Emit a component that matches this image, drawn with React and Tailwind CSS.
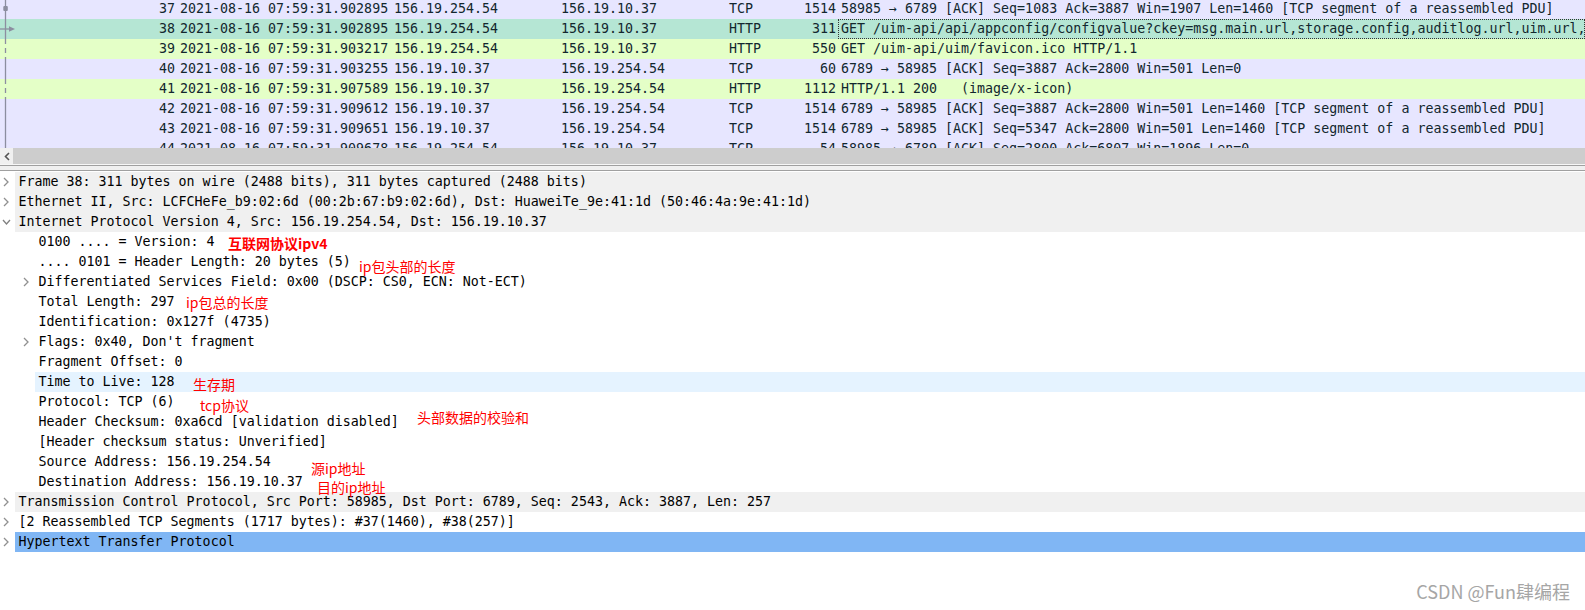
import React from "react";

const mono = "font-['DejaVu_Sans_Mono',monospace] text-[13.3px]";
const TCP = "bg-[#e7e6ff]";
const HTTP = "bg-[#e4ffc7]";

const packets = [
  { no: 37, time: "2021-08-16 07:59:31.902895", src: "156.19.254.54", dst: "156.19.10.37", proto: "TCP", len: 1514, info: "58985 → 6789 [ACK] Seq=1083 Ack=3887 Win=1907 Len=1460 [TCP segment of a reassembled PDU]", bg: TCP, mark: "dot" },
  { no: 38, time: "2021-08-16 07:59:31.902895", src: "156.19.254.54", dst: "156.19.10.37", proto: "HTTP", len: 311, info: "GET /uim-api/api/appconfig/configvalue?ckey=msg.main.url,storage.config,auditlog.url,uim.url,oss.url HTTP/1.1", bg: "bg-[#b5e6d4]", mark: "arrow", focus: true },
  { no: 39, time: "2021-08-16 07:59:31.903217", src: "156.19.254.54", dst: "156.19.10.37", proto: "HTTP", len: 550, info: "GET /uim-api/uim/favicon.ico HTTP/1.1", bg: HTTP, mark: "dash" },
  { no: 40, time: "2021-08-16 07:59:31.903255", src: "156.19.10.37", dst: "156.19.254.54", proto: "TCP", len: 60, info: "6789 → 58985 [ACK] Seq=3887 Ack=2800 Win=501 Len=0", bg: TCP, mark: "line" },
  { no: 41, time: "2021-08-16 07:59:31.907589", src: "156.19.10.37", dst: "156.19.254.54", proto: "HTTP", len: 1112, info: "HTTP/1.1 200   (image/x-icon)", bg: HTTP, mark: "dash" },
  { no: 42, time: "2021-08-16 07:59:31.909612", src: "156.19.10.37", dst: "156.19.254.54", proto: "TCP", len: 1514, info: "6789 → 58985 [ACK] Seq=3887 Ack=2800 Win=501 Len=1460 [TCP segment of a reassembled PDU]", bg: TCP, mark: "line" },
  { no: 43, time: "2021-08-16 07:59:31.909651", src: "156.19.10.37", dst: "156.19.254.54", proto: "TCP", len: 1514, info: "6789 → 58985 [ACK] Seq=5347 Ack=2800 Win=501 Len=1460 [TCP segment of a reassembled PDU]", bg: TCP, mark: "line" },
  { no: 44, time: "2021-08-16 07:59:31.909678", src: "156.19.254.54", dst: "156.19.10.37", proto: "TCP", len: 54, info: "58985 → 6789 [ACK] Seq=2800 Ack=6807 Win=1896 Len=0", bg: TCP, mark: "line" },
];

const tree = [
  { lvl: 0, arrow: "right", bg: "bg-[#f0f0f0]", text: "Frame 38: 311 bytes on wire (2488 bits), 311 bytes captured (2488 bits)" },
  { lvl: 0, arrow: "right", bg: "bg-[#f0f0f0]", text: "Ethernet II, Src: LCFCHeFe_b9:02:6d (00:2b:67:b9:02:6d), Dst: HuaweiTe_9e:41:1d (50:46:4a:9e:41:1d)" },
  { lvl: 0, arrow: "down", bg: "bg-[#f0f0f0]", text: "Internet Protocol Version 4, Src: 156.19.254.54, Dst: 156.19.10.37" },
  { lvl: 1, text: "0100 .... = Version: 4" },
  { lvl: 1, text: ".... 0101 = Header Length: 20 bytes (5)" },
  { lvl: 1, arrow: "right", text: "Differentiated Services Field: 0x00 (DSCP: CS0, ECN: Not-ECT)" },
  { lvl: 1, text: "Total Length: 297" },
  { lvl: 1, text: "Identification: 0x127f (4735)" },
  { lvl: 1, arrow: "right", text: "Flags: 0x40, Don't fragment" },
  { lvl: 1, text: "Fragment Offset: 0" },
  { lvl: 1, bg: "bg-[#e5f3ff]", text: "Time to Live: 128" },
  { lvl: 1, text: "Protocol: TCP (6)" },
  { lvl: 1, text: "Header Checksum: 0xa6cd [validation disabled]" },
  { lvl: 1, text: "[Header checksum status: Unverified]" },
  { lvl: 1, text: "Source Address: 156.19.254.54" },
  { lvl: 1, text: "Destination Address: 156.19.10.37" },
  { lvl: 0, arrow: "right", bg: "bg-[#f0f0f0]", text: "Transmission Control Protocol, Src Port: 58985, Dst Port: 6789, Seq: 2543, Ack: 3887, Len: 257" },
  { lvl: 0, arrow: "right", text: "[2 Reassembled TCP Segments (1717 bytes): #37(1460), #38(257)]" },
  { lvl: 0, arrow: "right", bg: "bg-[#80b6f4]", text: "Hypertext Transfer Protocol" },
];

// red notes drawn on top of the screenshot
const notes = [
  { text: "互联网协议ipv4", cls: "left-[228px] top-[233px] font-bold" },
  { text: "ip包头部的长度", cls: "left-[359px] top-[256px]" },
  { text: "ip包总的长度", cls: "left-[186px] top-[292px]" },
  { text: "生存期", cls: "left-[193px] top-[374px]" },
  { text: "tcp协议", cls: "left-[200px] top-[395px]" },
  { text: "头部数据的校验和", cls: "left-[417px] top-[407px]" },
  { text: "源ip地址", cls: "left-[311px] top-[458px]" },
  { text: "目的ip地址", cls: "left-[317px] top-[477px]" },
];

const Mark = ({ type }) => (
  <svg width="16" height="20" viewBox="0 0 16 20" className="shrink-0">
    <line x1="5.5" y1="0" x2="5.5" y2="20" stroke="#8c8ea0" strokeWidth="1.3" strokeDasharray={type === "dash" ? "5 4" : undefined} />
    {type === "dot" && <rect x="3.3" y="7" width="4.5" height="5" rx="1" fill="#8c8ea0" />}
    {type === "arrow" && (
      <>
        <line x1="0" y1="10" x2="10" y2="10" stroke="#8c8ea0" strokeWidth="1.3" />
        <polygon points="9,7.2 15,10 9,12.8" fill="#8c8ea0" />
      </>
    )}
  </svg>
);

const Chevron = ({ dir }) =>
  dir === "down" ? (
    <svg width="9" height="10" viewBox="0 0 9 10">
      <polyline points="1,3 4.5,7 8,3" fill="none" stroke="#808080" strokeWidth="1.3" />
    </svg>
  ) : (
    <svg width="9" height="10" viewBox="0 0 9 10">
      <polyline points="2,1 6,5 2,9" fill="none" stroke="#909090" strokeWidth="1.3" />
    </svg>
  );

const PacketRow = ({ p }) => (
  <div className={`flex h-[20px] items-center whitespace-pre text-[#12272e] ${p.bg}`}>
    <Mark type={p.mark} />
    <div className="w-[159px] shrink-0 text-right">{p.no}</div>
    <div className="w-[219px] shrink-0 pl-[5px]">{p.time}</div>
    <div className="w-[167px] shrink-0">{p.src}</div>
    <div className="w-[168px] shrink-0">{p.dst}</div>
    <div className="w-[74px] shrink-0">{p.proto}</div>
    <div className="w-[33px] shrink-0 text-right">{p.len}</div>
    <div
      className={`ml-[2px] flex h-[20px] flex-1 items-center overflow-hidden border border-dotted pl-[2px] ${
        p.focus ? "border-[#333]" : "border-transparent"
      }`}
    >
      {p.info}
    </div>
  </div>
);

const TreeRow = ({ r }) => (
  <div className="flex h-[20px]">
    <div className={`flex shrink-0 items-center ${r.lvl === 1 ? "w-[35px] pl-[22px]" : "w-[15px] pl-[2px]"}`}>
      {r.arrow && <Chevron dir={r.arrow} />}
    </div>
    <div className={`flex flex-1 items-center whitespace-pre pl-[3.5px] ${r.bg || ""}`}>{r.text}</div>
  </div>
);

export default function App() {
  return (
    <div className={`relative h-[610px] w-[1585px] overflow-hidden bg-white text-black ${mono}`}>
      <div className="h-[148px] overflow-hidden">
        <div className="-mt-px">
          {packets.map((p) => (
            <PacketRow key={p.no} p={p} />
          ))}
        </div>
      </div>

      {/* horizontal scrollbar */}
      <div className="flex h-[16px]">
        <div className="flex w-[13px] items-center justify-center bg-[#f0f0f0]">
          <svg width="6" height="9" viewBox="0 0 6 9">
            <polyline points="5,1 1.5,4.5 5,8" fill="none" stroke="#555" strokeWidth="1.6" />
          </svg>
        </div>
        <div className="flex-1 bg-[#cdcdcd]" />
      </div>

      <div className="h-px bg-[#f7f7f7]" />
      <div className="h-px bg-[#a0a0a0]" />
      <div className="h-[4px] bg-[#f0f0f0]" />
      <div className="h-px bg-[#a0a0a0]" />
      <div className="h-px bg-white" />

      <div>
        {tree.map((r, i) => (
          <TreeRow key={i} r={r} />
        ))}
      </div>

      {notes.map((n) => (
        <div
          key={n.text}
          className={`absolute whitespace-pre font-['Noto_Sans_CJK_SC',sans-serif] text-[14px] leading-[20px] text-[#ff0000] ${n.cls}`}
        >
          {n.text}
        </div>
      ))}

      <div className="absolute right-[15px] top-[578px] font-['Noto_Sans_CJK_SC',sans-serif] text-[18px] leading-[26px] text-[#a6a6a6]">
        CSDN @Fun肆编程
      </div>
    </div>
  );
}
